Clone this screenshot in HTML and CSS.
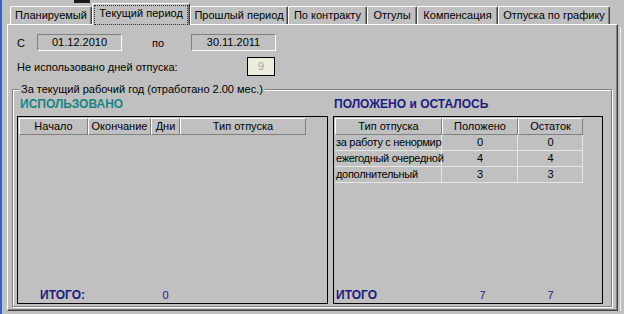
FILE: index.html
```html
<!DOCTYPE html>
<html lang="ru">
<head>
    <meta charset="UTF-8">
    <title>Отпуска</title>
    <link rel="stylesheet" href="styles.css">
</head>
<body>
<div class="window">
    <div class="main">
        <div class="top-strip"><span class="notch"></span></div>
        <div class="tabs">
            <div class="tab">Планируемый</div>
            <div class="tab active"><span class="focus">Текущий период</span></div>
            <div class="tab">Прошлый период</div>
            <div class="tab">По контракту</div>
            <div class="tab">Отгулы</div>
            <div class="tab">Компенсация</div>
            <div class="tab">Отпуска по графику</div>
        </div>
        <div class="panel">
            <div class="dates">
                <span class="lbl-from">С</span>
                <span class="field">01.12.2010</span>
                <span class="lbl-to">по</span>
                <span class="field">30.11.2011</span>
            </div>
            <div class="unused">
                <span class="lbl-unused">Не использовано дней отпуска:</span>
                <span class="field-disabled">9</span>
            </div>
            <fieldset class="group">
                <legend>За текущий рабочий год (отработано 2.00 мес.)</legend>
                <div class="cols">
                    <div class="col col-used">
                        <div class="heading used">ИСПОЛЬЗОВАНО</div>
                        <div class="box">
                            <table class="grid grid-used">
                                <colgroup>
                                    <col class="c-start">
                                    <col class="c-end">
                                    <col class="c-days">
                                    <col class="c-type">
                                </colgroup>
                                <thead>
                                <tr><th>Начало</th><th>Окончание</th><th>Дни</th><th>Тип отпуска</th></tr>
                                </thead>
                            </table>
                            <div class="fill"></div>
                            <div class="totals totals-used">
                                <span class="total-label">ИТОГО:</span>
                                <span></span>
                                <span class="total-num">0</span>
                                <span></span>
                            </div>
                        </div>
                    </div>
                    <div class="col col-left">
                        <div class="heading left">ПОЛОЖЕНО и ОСТАЛОСЬ</div>
                        <div class="box">
                            <table class="grid grid-left">
                                <colgroup>
                                    <col class="c-kind">
                                    <col class="c-due">
                                    <col class="c-rest">
                                </colgroup>
                                <thead>
                                <tr><th>Тип отпуска</th><th>Положено</th><th>Остаток</th></tr>
                                </thead>
                                <tbody>
                                <tr><td>за работу с ненормир</td><td class="num">0</td><td class="num">0</td></tr>
                                <tr><td>ежегодный очередной</td><td class="num">4</td><td class="num">4</td></tr>
                                <tr><td>дополнительный</td><td class="num">3</td><td class="num">3</td></tr>
                                </tbody>
                            </table>
                            <div class="fill"></div>
                            <div class="totals totals-left">
                                <span class="total-label">ИТОГО</span>
                                <span class="total-num due">7</span>
                                <span class="total-num">7</span>
                            </div>
                        </div>
                    </div>
                </div>
            </fieldset>
        </div>
    </div>
    <div class="edge-right"></div>
</div>
</body>
</html>
```

FILE: styles.css
```css
body{
    margin: 0;
    background: #c0c0c0;
    font-family: "Liberation Sans", Arial, sans-serif;
    font-size: 11px;
    color: #000;
    overflow: hidden;
}
.window{
    display: flex;
    width: 624px;
    height: 314px;
    border-left: 2px solid #2d62d6;
    box-sizing: border-box;
}
.main{
    width: 616px;
    padding-left: 5px;
    box-sizing: border-box;
    display: flex;
    flex-direction: column;
}
.edge-right{
    width: 1px;
    margin: 27px 0 3px 2px;
    background: #ececec;
}

/* tabs */
.top-strip{
    height: 3px;
}
.notch{
    display: block;
    margin-left: 67px;
    width: 16px;
    height: 3px;
    background: #1a1a1a;
}
.tabs{
    display: flex;
    align-items: flex-end;
    height: 21px;
    padding-left: 3px;
}
.tab{
    height: 18px;
    box-sizing: border-box;
    border: 1px solid;
    border-color: #fff #404040 transparent #fff;
    border-bottom: none;
    border-radius: 2px 2px 0 0;
    box-shadow: inset -1px 0 #808080;
    padding-top: 2px;
    text-align: center;
    line-height: 13px;
    white-space: nowrap;
}
.tab:nth-child(1){ width: 82px; }
.tab:nth-child(2){ width: 98px; }
.tab:nth-child(3){ width: 98px; }
.tab:nth-child(4){ width: 79px; }
.tab:nth-child(5){ width: 50px; }
.tab:nth-child(6){ width: 81px; }
.tab:nth-child(7){ width: 112px; }
.tab.active{
    height: 22px;
    margin-bottom: -1px;
    padding: 1px 1px 0;
    background: #c0c0c0;
    position: relative;
    z-index: 1;
}
.focus{
    display: block;
    height: 20px;
    box-sizing: border-box;
    border: 1px dotted #333;
    padding-top: 1px;
}

/* panel */
.panel{
    flex: 1;
    margin-bottom: 3px;
    border: 1px solid;
    border-color: #fff #404040 #404040 #fff;
    box-shadow: inset -1px -1px #808080;
    padding: 9px 5px 0 4px;
    display: flex;
    flex-direction: column;
}
.dates{
    display: flex;
    align-items: center;
    height: 17px;
    padding-left: 5px;
}
.lbl-from{
    width: 20px;
}
.lbl-to{
    width: 39px;
    margin-left: 30px;
}
.field{
    width: 85px;
    height: 17px;
    box-sizing: border-box;
    border: 1px solid;
    border-color: #808080 #fff #fff #808080;
    text-align: center;
    line-height: 15px;
}
.unused{
    display: flex;
    align-items: center;
    height: 19px;
    margin-top: 6px;
    padding-left: 5px;
}
.lbl-unused{
    width: 230px;
}
.field-disabled{
    width: 28px;
    height: 19px;
    box-sizing: border-box;
    border: 1px solid #000;
    background: #ecebdc;
    color: #a6a69a;
    text-align: center;
    line-height: 17px;
}

/* group box */
.group{
    flex: 1;
    margin: 7px 0 3px;
    padding: 0 7px 2px 4px;
    border: 1px solid #808080;
    box-shadow: inset 1px 1px 0 #fff, 1px 1px 0 #fff;
    display: flex;
    flex-direction: column;
    min-height: 0;
}
.group legend{
    margin-left: 2px;
    padding: 0 2px;
    line-height: 13px;
    background: #c0c0c0;
}
.cols{
    flex: 1;
    display: flex;
    gap: 5px;
}
.col{
    display: flex;
    flex-direction: column;
}
.col-used{
    width: 311px;
}
.col-left{
    width: 270px;
}
.heading{
    font-size: 12px;
    font-weight: bold;
    line-height: 14px;
    padding-top: 1px;
    white-space: nowrap;
}
.heading.used{
    color: #1a8585;
    padding-left: 3px;
}
.heading.left{
    color: #1c1c80;
    padding-left: 1px;
}
.box{
    flex: 1;
    margin-top: 5px;
    border: 1px solid #000;
    padding: 1px;
    display: flex;
    flex-direction: column;
}
.fill{
    flex: 1;
}

/* grids */
.grid{
    border-collapse: separate;
    border-spacing: 0;
    table-layout: fixed;
}
.grid-used{ width: 287px; }
.grid-left{ width: 248px; }
.c-start{ width: 69px; }
.c-end{ width: 63px; }
.c-days{ width: 29px; }
.c-type{ width: 126px; }
.c-kind{ width: 107px; }
.c-due{ width: 76px; }
.c-rest{ width: 65px; }
.grid th{
    font-weight: normal;
    padding: 0;
    line-height: 15px;
    border: 1px solid;
    border-color: #fff #808080 #808080 #fff;
    white-space: nowrap;
    overflow: hidden;
}
.grid td{
    padding: 0 0 0 1px;
    line-height: 15px;
    border-right: 1px solid #e6e6e6;
    border-bottom: 1px solid #e6e6e6;
    white-space: nowrap;
    letter-spacing: -0.3px;
}
.grid td.num{
    text-align: center;
    letter-spacing: 0;
}

/* totals */
.totals{
    display: grid;
    line-height: 14px;
}
.totals-used{
    grid-template-columns: 69px 63px 29px 126px;
}
.totals-left{
    grid-template-columns: 107px 76px 65px;
}
.total-label{
    font-size: 12px;
    font-weight: bold;
    color: #1c1c80;
    white-space: nowrap;
}
.totals-used .total-label{
    padding-left: 21px;
}
.totals-left .total-label{
    padding-left: 1px;
}
.total-num{
    text-align: center;
    color: #1c1c80;
}
.total-num.due{
    padding-left: 5px;
}
```
